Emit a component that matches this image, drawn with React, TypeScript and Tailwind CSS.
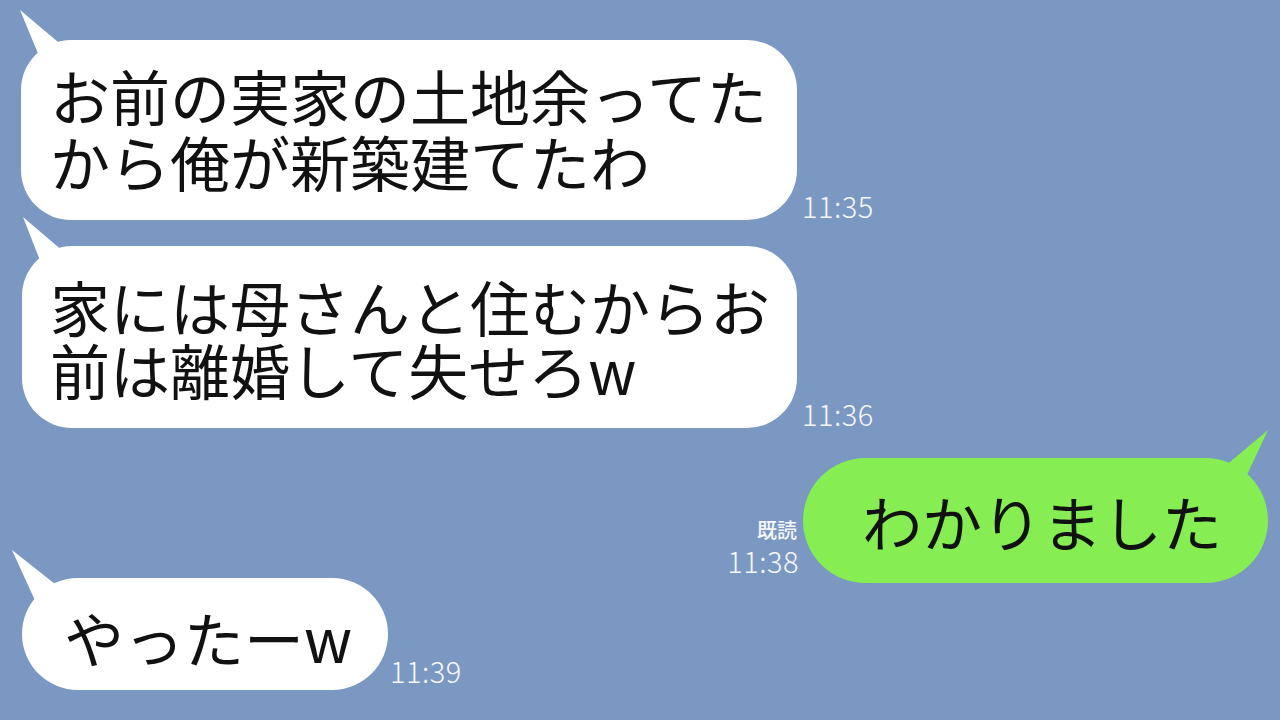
import React from "react";

function TailLeft({ tipX, tipY, ax, ay, bx, by }: { tipX: number; tipY: number; ax: number; ay: number; bx: number; by: number }) {
  return (
    <svg className="absolute left-0 top-0 overflow-visible" width="1" height="1">
      <polygon points={`${tipX},${tipY} ${ax},${ay} ${bx},${by}`} fill="#ffffff" />
    </svg>
  );
}

function Time({ t, cls }: { t: string; cls?: string }) {
  return (
    <span className={"font-light text-[29px] leading-[29px] tracking-[0.5px] text-[#f5f7fb] " + (cls ?? "")}>{t}</span>
  );
}

export default function App() {
  return (
    <div className="w-[1280px] h-[720px] overflow-hidden bg-[#7b98c2] flex flex-col font-['Noto_Sans_CJK_JP','Noto_Sans_CJK_SC',sans-serif] text-[#111111]">
      {/* Row 1 */}
      <div className="flex items-end mt-[40px] pl-[21px]">
        <div className="relative w-[776px] h-[180px] bg-white rounded-[50px] pl-[29px] pt-[22px]">
          <TailLeft tipX={-1} tipY={-30} ax={28} ay={40} bx={56} by={18} />
          <div className="relative text-[60px] leading-[66px] whitespace-nowrap">
            <div>お前の実家の土地余ってた</div>
            <div>から俺が新築建てたわ</div>
          </div>
        </div>
        <Time t="11:35" cls="ml-[5px]" />
      </div>

      {/* Row 2 */}
      <div className="flex items-end mt-[26px] pl-[22px]">
        <div className="relative w-[775px] h-[182px] bg-white rounded-[50px] pl-[28px] pt-[28px]">
          <TailLeft tipX={1} tipY={-29} ax={28} ay={40} bx={56} by={18} />
          <div className="relative text-[60px] leading-[63px] whitespace-nowrap">
            <div>家には母さんと住むからお</div>
            <div>前は離婚して失せろw</div>
          </div>
        </div>
        <Time t="11:36" cls="ml-[5px]" />
      </div>

      {/* Row 3 (me) */}
      <div className="flex items-end justify-end mt-[30px] pr-[12px]">
        <div className="flex flex-col items-end mr-[4px] mb-[8px]">
          <span className="font-medium text-[20px] leading-[20px] text-[#f5f7fb] mr-[2px]">既読</span>
          <Time t="11:38" cls="mt-[6px]" />
        </div>
        <div className="relative w-[465px] h-[125px] bg-[#86ee52] rounded-[62.5px] flex items-center pl-[59px]">
          <svg className="absolute right-0 top-0 overflow-visible" width="1" height="1">
            <polygon points="1,-28 -56,20 -29,36" fill="#86ee52" />
          </svg>
          <span className="relative text-[60px] leading-[60px] whitespace-nowrap">わかりました</span>
        </div>
      </div>

      {/* Row 4 */}
      <div className="flex items-end mt-[-5px] pl-[22px]">
        <div className="relative w-[366px] h-[112px] bg-white rounded-[56px] flex items-center pl-[42px] pt-[6px]">
          <TailLeft tipX={-10} tipY={-28} ax={21} ay={40} bx={38} by={10} />
          <span className="relative text-[60px] leading-[60px] whitespace-nowrap">やったーw</span>
        </div>
        <Time t="11:39" cls="ml-[2px] mb-[5px]" />
      </div>
    </div>
  );
}
